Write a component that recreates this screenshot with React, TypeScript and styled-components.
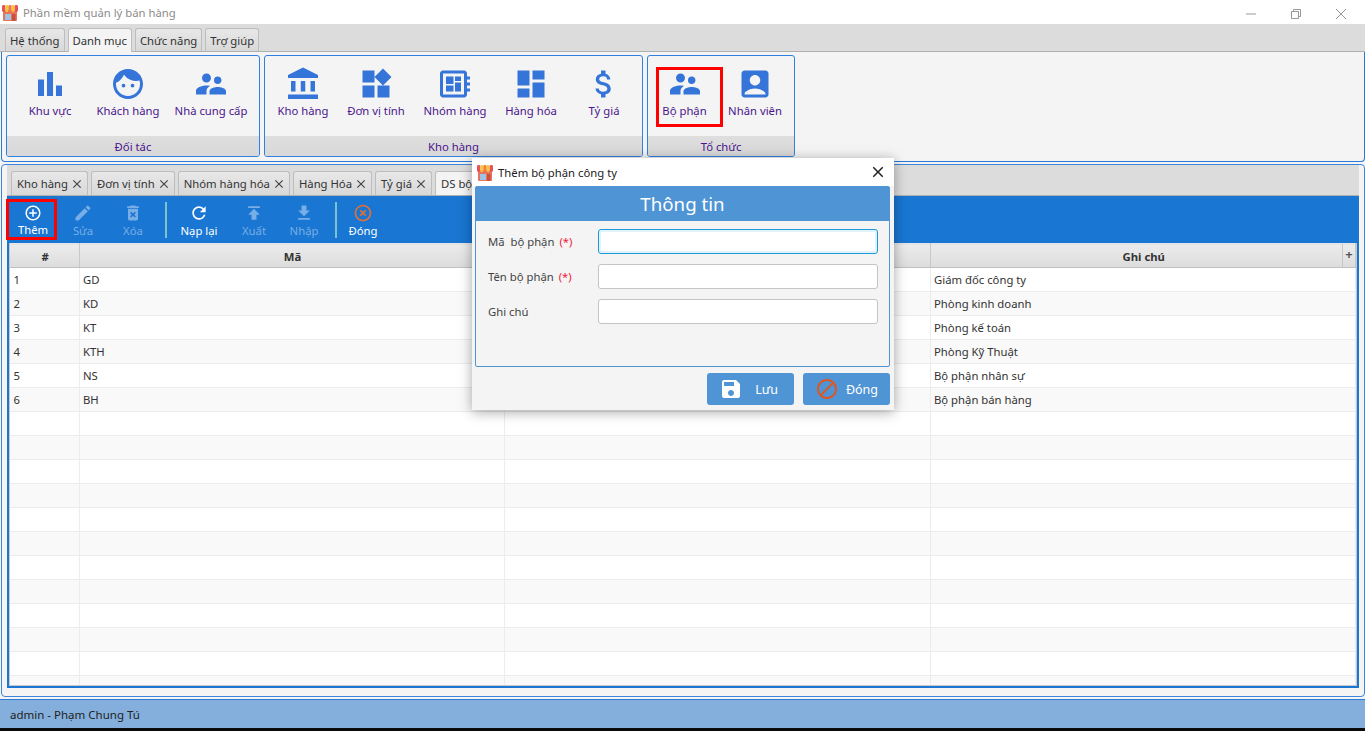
import React from 'react';
import styled, { createGlobalStyle } from 'styled-components';
import {
  MdAccountBalance,
  MdAccountBox,
  MdAddCircleOutline,
  MdAttachMoney,
  MdBarChart,
  MdBlock,
  MdClose,
  MdDashboard,
  MdDeleteForever,
  MdDeveloperBoard,
  MdEdit,
  MdFace,
  MdGetApp,
  MdHighlightOff,
  MdPublish,
  MdRefresh,
  MdSave,
  MdSupervisorAccount,
  MdWidgets,
} from 'react-icons/md';

const GlobalStyle = createGlobalStyle`
  html, body { margin: 0; padding: 0; height: 100%; overflow: hidden; }
  *, *::before, *::after { box-sizing: border-box; }
  body { font-family: "Noto Sans", "Open Sans", sans-serif; font-size: 11.3px; color: #333; }
`;

function StoreIcon() {
  return (
    <svg width="16" height="17" viewBox="0 0 16 17">
      <rect x="1" y="6" width="14" height="11" rx="1" fill="#e8735a" />
      <rect x="3" y="10" width="6" height="6" fill="#9cc4e4" />
      <rect x="10" y="10" width="3.5" height="7" fill="#c9503c" />
      <rect x="0" y="1" width="3.2" height="7" rx="1.4" fill="#e8505b" />
      <rect x="3.2" y="1" width="3.2" height="7" rx="1.4" fill="#f9c440" />
      <rect x="6.4" y="1" width="3.2" height="7" rx="1.4" fill="#ef7d3c" />
      <rect x="9.6" y="1" width="3.2" height="7" rx="1.4" fill="#f9c440" />
      <rect x="12.8" y="1" width="3.2" height="7" rx="1.4" fill="#e8505b" />
    </svg>
  );
}

const ribbonGroups = [
  {
    title: 'Đối tác',
    width: 254,
    items: [
      { label: 'Khu vực', icon: <MdBarChart />, width: 86 },
      { label: 'Khách hàng', icon: <MdFace />, width: 70 },
      { label: 'Nhà cung cấp', icon: <MdSupervisorAccount />, width: 96 },
    ],
  },
  {
    title: 'Kho hàng',
    width: 379,
    items: [
      { label: 'Kho hàng', icon: <MdAccountBalance />, width: 76 },
      { label: 'Đơn vị tính', icon: <MdWidgets />, width: 70 },
      { label: 'Nhóm hàng', icon: <MdDeveloperBoard />, width: 88 },
      { label: 'Hàng hóa', icon: <MdDashboard />, width: 64 },
      { label: 'Tỷ giá', icon: <MdAttachMoney />, width: 82 },
    ],
  },
  {
    title: 'Tổ chức',
    width: 148,
    items: [
      { label: 'Bộ phận', icon: <MdSupervisorAccount />, width: 67, marked: true },
      { label: 'Nhân viên', icon: <MdAccountBox />, width: 64 },
    ],
  },
];

const rows = [
  ['1', 'GD', '', 'Giám đốc công ty'],
  ['2', 'KD', '', 'Phòng kinh doanh'],
  ['3', 'KT', '', 'Phòng kế toán'],
  ['4', 'KTH', '', 'Phòng Kỹ Thuật'],
  ['5', 'NS', '', 'Bộ phận nhân sự'],
  ['6', 'BH', '', 'Bộ phận bán hàng'],
];

const emptyRows = Array.from({ length: 12 }, (_, i) => i + 6);

export default function App() {
  return (
    <Screen>
      <GlobalStyle />
      <TitleBar>
        <StoreIcon />
        <AppTitle>Phần mềm quản lý bán hàng</AppTitle>
        <WindowButtons>
          <svg width="12" height="12" viewBox="0 0 12 12"><path d="M1 6h10" stroke="#999" /></svg>
          <svg width="12" height="12" viewBox="0 0 12 12" fill="none" stroke="#999"><path d="M1.5 3.5h7v7h-7zM3.5 3.5v-2h7v7h-2" /></svg>
          <svg width="12" height="12" viewBox="0 0 12 12"><path d="M1 1l10 10M11 1L1 11" stroke="#999" /></svg>
        </WindowButtons>
      </TitleBar>

      <MenuTabs>
        <MenuTab>Hệ thống</MenuTab>
        <MenuTab $active>Danh mục</MenuTab>
        <MenuTab>Chức năng</MenuTab>
        <MenuTab>Trợ giúp</MenuTab>
      </MenuTabs>

      <Ribbon>
        {ribbonGroups.map((group) => (
          <RibbonGroup key={group.title} $width={group.width}>
            <RibbonItems>
              {group.items.map((item) => (
                <RibbonButton key={item.label} $width={item.width} $marked={item.marked}>
                  {item.icon}
                  <span>{item.label}</span>
                </RibbonButton>
              ))}
            </RibbonItems>
            <RibbonCaption>{group.title}</RibbonCaption>
          </RibbonGroup>
        ))}
      </Ribbon>

      <Work>
        <DocTabs>
          {['Kho hàng', 'Đơn vị tính', 'Nhóm hàng hóa', 'Hàng Hóa', 'Tỷ giá'].map((t) => (
            <DocTab key={t}>
              {t}
              <MdClose />
            </DocTab>
          ))}
          <DocTab $active>DS bộ phận</DocTab>
        </DocTabs>

        <ListFrame>
          <Toolbar>
            <ToolButton $width={51} $marked>
              <MdAddCircleOutline />
              Thêm
            </ToolButton>
            <ToolButton $width={52} $disabled>
              <MdEdit />
              Sửa
            </ToolButton>
            <ToolButton $width={48} $disabled>
              <MdDeleteForever />
              Xóa
            </ToolButton>
            <ToolSeparator $left={8} />
            <ToolButton $width={64}>
              <MdRefresh />
              Nạp lại
            </ToolButton>
            <ToolButton $width={46} $disabled>
              <MdPublish />
              Xuất
            </ToolButton>
            <ToolButton $width={54} $disabled>
              <MdGetApp />
              Nhập
            </ToolButton>
            <ToolSeparator $left={4} />
            <ToolButton $width={52}>
              <CloseGlyph><MdHighlightOff /></CloseGlyph>
              Đóng
            </ToolButton>
          </Toolbar>

          <TableArea>
            <Table>
              <colgroup>
                <col style={{ width: 69 }} />
                <col style={{ width: 425 }} />
                <col style={{ width: 426 }} />
                <col />
              </colgroup>
              <thead>
                <tr>
                  <HeadCell>#</HeadCell>
                  <HeadCell>Mã</HeadCell>
                  <HeadCell />
                  <HeadCell>
                    Ghi chú
                    <PlusMark>+</PlusMark>
                  </HeadCell>
                </tr>
              </thead>
              <tbody>
                {rows.map((r, i) => (
                  <Row key={r[0]} $odd={i % 2 === 1}>
                    {r.map((c, j) => (
                      <Cell key={j}>{c}</Cell>
                    ))}
                  </Row>
                ))}
                {emptyRows.map((i) => (
                  <Row key={i} $odd={i % 2 === 1}>
                    <Cell />
                    <Cell />
                    <Cell />
                    <Cell />
                  </Row>
                ))}
              </tbody>
            </Table>
          </TableArea>
        </ListFrame>
      </Work>

      <StatusBar>admin - Phạm Chung Tú</StatusBar>
      <BlackEdge />

      <Dialog>
        <DialogTitle>
          <StoreIcon />
          <span>Thêm bộ phận công ty</span>
          <DialogClose><MdClose /></DialogClose>
        </DialogTitle>
        <DialogPanel>
          <PanelHead>Thông tin</PanelHead>
          <Form>
            <FormRow>
              <FieldLabel>Mã&nbsp; bộ phận <Req>(*)</Req></FieldLabel>
              <FieldInput $focused />
            </FormRow>
            <FormRow>
              <FieldLabel>Tên bộ phận <Req>(*)</Req></FieldLabel>
              <FieldInput />
            </FormRow>
            <FormRow>
              <FieldLabel>Ghi chú</FieldLabel>
              <FieldInput />
            </FormRow>
          </Form>
        </DialogPanel>
        <DialogActions>
          <ActionButton>
            <MdSave />
            <span>Lưu</span>
          </ActionButton>
          <ActionButton>
            <BlockGlyph><MdBlock /></BlockGlyph>
            <span>Đóng</span>
          </ActionButton>
        </DialogActions>
      </Dialog>
    </Screen>
  );
}

const Screen = styled.div`
  position: relative;
  width: 1365px;
  height: 731px;
  display: flex;
  flex-direction: column;
  background: #f4f4f4;
  overflow: hidden;
`;

const TitleBar = styled.div`
  height: 24px;
  flex: none;
  display: flex;
  align-items: center;
  padding-left: 2px;
  background: #fff;
`;

const AppTitle = styled.span`
  margin-left: 5px;
  color: #8c8c8c;
  font-size: 11.3px;
`;

const WindowButtons = styled.div`
  margin-left: auto;
  display: flex;
  align-items: center;
  gap: 33px;
  padding-right: 18px;
  margin-top: 4px;
`;

const MenuTabs = styled.div`
  height: 28px;
  flex: none;
  display: flex;
  align-items: flex-end;
  gap: 3px;
  padding-left: 5px;
  background: #dcdcdc;
  border-bottom: 1px solid #b0b0b0;
`;

const MenuTab = styled.div<{ $active?: boolean }>`
  height: ${(p) => (p.$active ? 24 : 23)}px;
  margin-bottom: ${(p) => (p.$active ? -1 : 0)}px;
  padding: 0 4px;
  display: flex;
  align-items: center;
  border: 1px solid #bdbdbd;
  border-bottom: none;
  border-radius: 3px 3px 0 0;
  color: #333;
  background: ${(p) => (p.$active ? '#f4f4f4' : 'linear-gradient(#e8e8e8, #d8d8d8)')};
`;

const Ribbon = styled.div`
  height: 110px;
  width: 1364px;
  flex: none;
  display: flex;
  gap: 4px;
  margin-left: 1px;
  padding: 3px 0 0 4px;
  border: 1px solid #2a7ad6;
  border-top: none;
  border-radius: 0 0 4px 4px;
`;

const RibbonGroup = styled.div<{ $width: number }>`
  width: ${(p) => p.$width}px;
  height: 102px;
  display: flex;
  flex-direction: column;
  border: 1px solid #2f80e0;
  border-radius: 3px;
  overflow: hidden;
`;

const RibbonItems = styled.div`
  height: 80px;
  display: flex;
`;

const RibbonButton = styled.div<{ $width: number; $marked?: boolean }>`
  position: relative;
  width: ${(p) => p.$width}px;
  flex: none;
  display: flex;
  flex-direction: column;
  align-items: center;
  color: #4a148c;
  white-space: nowrap;
  padding-top: 10px;
  ${(p) => (p.$marked ? 'margin-left: 8px; padding-right: 10px;' : '')}

  ${(p) =>
    p.$marked
      ? `&::after {
          content: '';
          position: absolute;
          left: 0;
          right: 0;
          top: 11px;
          height: 60px;
          border: 3px solid #f00;
        }`
      : ''}

  svg {
    width: 36px;
    height: 36px;
    color: #3574d8;
    flex: none;
  }

  span {
    margin-top: 1px;
    line-height: 16px;
  }
`;

const RibbonCaption = styled.div`
  flex: 1;
  display: flex;
  align-items: center;
  justify-content: center;
  color: #4a148c;
  background: linear-gradient(#dedede, #d8d8d8);
`;

const Work = styled.div`
  height: 533px;
  width: 1364px;
  flex: none;
  margin: 2px 0 0 1px;
  padding: 0 5px 8px 5px;
  display: flex;
  flex-direction: column;
  border: 1px solid #3b86dc;
  border-radius: 4px;
  background: #f4f4f4;
`;

const DocTabs = styled.div`
  height: 31px;
  flex: none;
  display: flex;
  align-items: flex-end;
  gap: 3px;
  padding-left: 4px;
  background: #dcdcdc;
  border-bottom: 1px solid #b0b0b0;
`;

const DocTab = styled.div<{ $active?: boolean }>`
  height: 24px;
  padding: 0 3px 0 5px;
  display: flex;
  align-items: center;
  gap: 2px;
  border: 1px solid #bdbdbd;
  border-bottom: none;
  border-radius: 3px 3px 0 0;
  color: #333;
  white-space: nowrap;
  background: ${(p) => (p.$active ? '#f4f4f4' : 'linear-gradient(#e8e8e8, #d8d8d8)')};

  svg {
    width: 14px;
    height: 14px;
    color: #444;
  }
`;

const ListFrame = styled.div`
  flex: 1;
  min-height: 0;
  display: flex;
  flex-direction: column;
  border: 2px solid #1976d2;
  border-top: none;
`;

const Toolbar = styled.div`
  height: 47px;
  flex: none;
  display: flex;
  align-items: center;
  margin: 0 -2px;
  background: #1976d2;
`;

const ToolButton = styled.div<{ $width: number; $disabled?: boolean; $marked?: boolean }>`
  width: ${(p) => p.$width}px;
  height: 41px;
  flex: none;
  display: flex;
  flex-direction: column;
  align-items: center;
  justify-content: center;
  padding-top: 2px;
  color: ${(p) => (p.$disabled ? '#78aee6' : '#fff')};
  ${(p) => (p.$marked ? 'border: 3px solid #f00; padding-left: 3px; margin-left: -1px;' : '')}

  svg {
    width: 20px;
    height: 20px;
  }
`;

const CloseGlyph = styled.span`
  height: 20px;
  color: #e0703a;
`;

const ToolSeparator = styled.div<{ $left: number }>`
  width: 2px;
  height: 36px;
  flex: none;
  margin-left: ${(p) => p.$left}px;
  background: #7fc4c4;
`;

const TableArea = styled.div`
  flex: 1;
  min-height: 0;
  overflow: hidden;
  border-left: 1px solid #c8c8c8;
  border-right: 1px solid #c8c8c8;
  border-bottom: 1px solid #c8c8c8;
  background: #fff;
`;

const Table = styled.table`
  width: 100%;
  table-layout: fixed;
  border-collapse: collapse;
`;

const HeadCell = styled.th`
  position: relative;
  height: 24px;
  padding: 1px 0 0 2px;
  font-size: 11.3px;
  font-weight: 700;
  color: #333;
  text-align: center;
  background: linear-gradient(#ececec, #dcdcdc);
  border-right: 1px solid #c8c8c8;
  border-bottom: 1px solid #c0c0c0;
  border-top: 1px solid #e6e6e6;
`;

const PlusMark = styled.span`
  position: absolute;
  right: 0;
  top: 0;
  width: 13px;
  height: 23px;
  line-height: 21px;
  font-weight: 700;
  font-size: 13px;
  border-left: 1px solid #c8c8c8;
  color: #555;
`;

const Row = styled.tr<{ $odd?: boolean }>`
  height: 24px;
  background: ${(p) => (p.$odd ? '#f9f9f9' : '#fff')};
`;

const Cell = styled.td`
  height: 24px;
  padding: 0 3px 1px 3.5px;
  font-size: 11.3px;
  color: #333;
  border-right: 1px solid #ececec;
  border-bottom: 1px solid #ececec;
`;

const StatusBar = styled.div`
  height: 29px;
  flex: none;
  margin-top: 2px;
  padding-left: 10px;
  display: flex;
  align-items: center;
  color: #222;
  font-size: 11.5px;
  background: #84afdc;
  border-top: 1px solid #2a7ad6;
`;

const BlackEdge = styled.div`
  flex: 1;
  background: #0a0a0a;
`;

const Dialog = styled.div`
  position: absolute;
  left: 472px;
  top: 158px;
  width: 422px;
  height: 252px;
  display: flex;
  flex-direction: column;
  background: #f4f4f4;
  box-shadow: 0 2px 12px rgba(0, 0, 0, 0.35);
`;

const DialogTitle = styled.div`
  height: 28px;
  flex: none;
  display: flex;
  align-items: center;
  gap: 5px;
  padding-left: 5px;
  font-size: 11.3px;
  color: #222;
  background: #fff;
`;

const DialogClose = styled.span`
  margin-left: auto;
  margin-right: 7px;
  display: flex;

  svg {
    width: 18px;
    height: 18px;
    color: #222;
  }
`;

const DialogPanel = styled.div`
  height: 181px;
  flex: none;
  margin: 0 4px 0 3px;
  border: 1px solid #4f94d4;
  border-radius: 2px;
`;

const PanelHead = styled.div`
  height: 34px;
  padding-bottom: 2px;
  display: flex;
  align-items: center;
  justify-content: center;
  font-size: 18.7px;
  color: #fff;
  background: #4f94d4;
`;

const Form = styled.div`
  display: flex;
  flex-direction: column;
  gap: 10px;
  padding: 8px 11px 0 12px;
`;

const FormRow = styled.div`
  display: flex;
  align-items: center;
  height: 25px;
`;

const FieldLabel = styled.div`
  width: 110px;
  flex: none;
  color: #444;
  white-space: nowrap;
`;

const Req = styled.span`
  margin-left: 2px;
  color: #f01a3c;
`;

const FieldInput = styled.div<{ $focused?: boolean }>`
  flex: 1;
  height: 25px;
  background: #fff;
  border-radius: 3px;
  border: 1px solid ${(p) => (p.$focused ? '#1a9bd7' : '#c4c4c4')};
  ${(p) => (p.$focused ? 'box-shadow: inset 0 0 0 2px #e2f2fa;' : '')}
`;

const DialogActions = styled.div`
  flex: 1;
  display: flex;
  justify-content: flex-end;
  gap: 9px;
  padding: 6px 4px 5px 0;
`;

const ActionButton = styled.div`
  width: 87px;
  display: flex;
  align-items: center;
  justify-content: space-between;
  padding: 0 12px 0 12px;
  color: #fff;
  font-size: 12.5px;
  background: #4f94d4;
  border-radius: 3px;

  svg {
    width: 24px;
    height: 24px;
    display: block;
  }

  &:first-child span {
    margin-right: 4px;
  }
`;

const BlockGlyph = styled.span`
  color: #e0561e;
`;
